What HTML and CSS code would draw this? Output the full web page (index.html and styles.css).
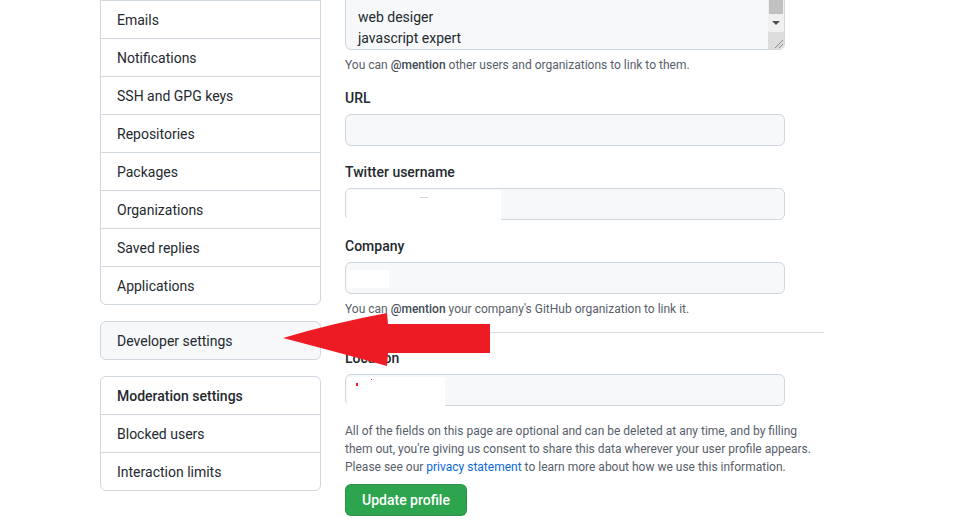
FILE: index.html
```html
<!DOCTYPE html>
<html lang="en">
<head>
<meta charset="utf-8">
<title>Public profile</title>
<link rel="stylesheet" href="styles.css">
</head>
<body>
<div class="page">
  <aside class="sidebar">
    <nav class="menu">
      <a class="menu-item">Account security</a>
      <a class="menu-item">Emails</a>
      <a class="menu-item">Notifications</a>
      <a class="menu-item">SSH and GPG keys</a>
      <a class="menu-item">Repositories</a>
      <a class="menu-item">Packages</a>
      <a class="menu-item">Organizations</a>
      <a class="menu-item">Saved replies</a>
      <a class="menu-item">Applications</a>
    </nav>
    <nav class="menu menu-muted">
      <a class="menu-item">Developer settings</a>
    </nav>
    <nav class="menu">
      <h3 class="menu-heading">Moderation settings</h3>
      <a class="menu-item">Blocked users</a>
      <a class="menu-item">Interaction limits</a>
    </nav>
  </aside>

  <main class="main">
    <div class="textarea">
      <div class="ta-line">web desiger</div>
      <div class="ta-line">javascript expert</div>
      <div class="scrollbar">
        <div class="sb-thumb"></div>
        <div class="sb-btn"><span class="sb-arrow"></span></div>
        <div class="sb-corner">
          <svg width="12" height="12" viewBox="0 0 12 12"><path d="M3 11 L11 3 M7 11 L11 7" stroke="#8a8a8a" stroke-width="1"/></svg>
        </div>
      </div>
    </div>
    <p class="note first">You can <b>@mention</b> other users and organizations to link to them.</p>

    <div class="group">
      <label class="label">URL</label>
      <div class="input"></div>
    </div>

    <div class="group">
      <label class="label">Twitter username</label>
      <div class="input"><span class="redact r-twitter"></span><span class="dash"></span></div>
    </div>

    <div class="group">
      <label class="label">Company</label>
      <div class="input"><span class="redact r-company"></span></div>
      <p class="note company-note">You can <b>@mention</b> your company's GitHub organization to link it.</p>
    </div>

    <hr class="divider">

    <div class="group">
      <label class="label">Location</label>
      <div class="input"><span class="redact r-location"><i class="speck s1"></i><i class="speck s2"></i></span></div>
    </div>

    <p class="note info">All of the fields on this page are optional and can be deleted at any time, and by filling them out, you're giving us consent to share this data wherever your user profile appears. Please see our <a class="link">privacy statement</a> to learn more about how we use this information.</p>

    <button class="btn">Update profile</button>
  </main>

  <svg class="arrow" width="220" height="60" viewBox="0 0 220 60">
    <path d="M0 25 Q50 10 104 0 L105 11 L207 11 L207 40 L105 40 L104 53 Q50 38 0 25 Z" fill="#ed1c24"/>
  </svg>
</div>
</body>
</html>
```

FILE: styles.css
```css
* { box-sizing: border-box; }
html, body { margin: 0; padding: 0; background: #fff; overflow: hidden; }
body {
  font-family: Roboto, "Noto Sans", sans-serif;
  font-size: 14px;
  color: #24292f;
}
.page {
  position: relative;
  display: flex;
  gap: 24px;
  padding-left: 100px;
  margin-top: -38px;
}
.sidebar {
  width: 221px;
  flex: none;
  display: flex;
  flex-direction: column;
  gap: 16px;
}
.menu {
  border: 1px solid #d0d7de;
  border-radius: 6px;
  background: #fff;
  display: flex;
  flex-direction: column;
  overflow: hidden;
}
.menu-item, .menu-heading {
  display: block;
  height: 38px;
  padding: 1px 16px 0;
  line-height: 37px;
  border-bottom: 1px solid #d0d7de;
  color: #24292f;
  font-size: 14px;
  font-weight: 400;
  margin: 0;
  overflow: hidden;
}
.menu-heading { font-weight: 500; }
.menu .menu-item:last-child { border-bottom: 0; height: 37px; }
.menu-muted { background: #f6f8fa; }

.main {
  width: 479px;
  flex: none;
  display: flex;
  flex-direction: column;
  align-items: flex-start;
}
.textarea {
  position: relative;
  width: 440px;
  height: 88px;
  background: #f6f8fa;
  border: 1px solid #d0d7de;
  border-radius: 6px;
  display: flex;
  flex-direction: column;
  justify-content: flex-end;
  padding: 0 12px 0 12px;
}
.ta-line { line-height: 21px; font-size: 14px; }
.scrollbar {
  position: absolute;
  right: 0;
  bottom: 0;
  width: 16px;
  height: 100%;
  background: #f0f0f0;
  display: flex;
  flex-direction: column;
  justify-content: flex-end;
  border-bottom-right-radius: 5px;
  overflow: hidden;
}
.sb-thumb { height: 51px; margin: 0 1px; background: #c1c1c1; }
.sb-btn { height: 18px; display: flex; align-items: center; justify-content: center; }
.sb-arrow {
  width: 0; height: 0;
  border-left: 4px solid transparent;
  border-right: 4px solid transparent;
  border-top: 4px solid #505050;
}
.sb-corner { height: 17px; background: #dcdcdc; display: flex; align-items: flex-end; justify-content: flex-end; }
.sb-corner svg { display: block; }

.note {
  margin: 5px 0 0;
  font-size: 12px;
  line-height: 18px;
  color: #57606a;
}
.note.first { margin-top: 6px; }
.note b { font-weight: 500; color: #424a53; }
.group {
  margin-top: 14px;
  width: 100%;
  display: flex;
  flex-direction: column;
  align-items: flex-start;
}
.group + .group { margin-top: 16px; }
.label {
  display: block;
  font-weight: 500;
  font-size: 14px;
  line-height: 20px;
  margin-bottom: 6px;
}
.input {
  position: relative;
  width: 440px;
  height: 32px;
  background: #f6f8fa;
  border: 1px solid #d0d7de;
  border-radius: 6px;
}
.redact { position: absolute; background: #fff; display: block; }
.r-twitter { left: 1px; top: 1px; width: 154px; height: 30px; }
.dash { position: absolute; left: 74px; top: 8px; width: 8px; height: 1px; background: #d0d7de; }
.r-company { left: 1px; top: 7px; width: 42px; height: 18px; }
.r-location { left: 1px; top: 2px; width: 98px; height: 30px; }
.speck { position: absolute; background: #ed1c24; display: block; }
.s1 { left: 9px; top: 6px; width: 2px; height: 3px; }
.s2 { left: 24px; top: 2px; width: 1px; height: 1px; }
.company-note { margin-top: 6px; }

.divider {
  width: 479px;
  margin: 14px 0 0;
  border: 0;
  border-top: 1px solid #d8dee4;
}
.divider + .group { margin-top: 15px; }
.info { margin-top: 16px; color: #57606a; }
.link { color: #0969da; text-decoration: none; }
.btn {
  margin-top: 8px;
  height: 32px;
  padding: 0 16px;
  background: #2da44e;
  color: #fff;
  border: 1px solid rgba(27,31,36,0.15);
  border-radius: 6px;
  font-family: inherit;
  font-size: 14px;
  font-weight: 500;
}

.arrow {
  position: absolute;
  left: 283px;
  top: 351px;
}
```
